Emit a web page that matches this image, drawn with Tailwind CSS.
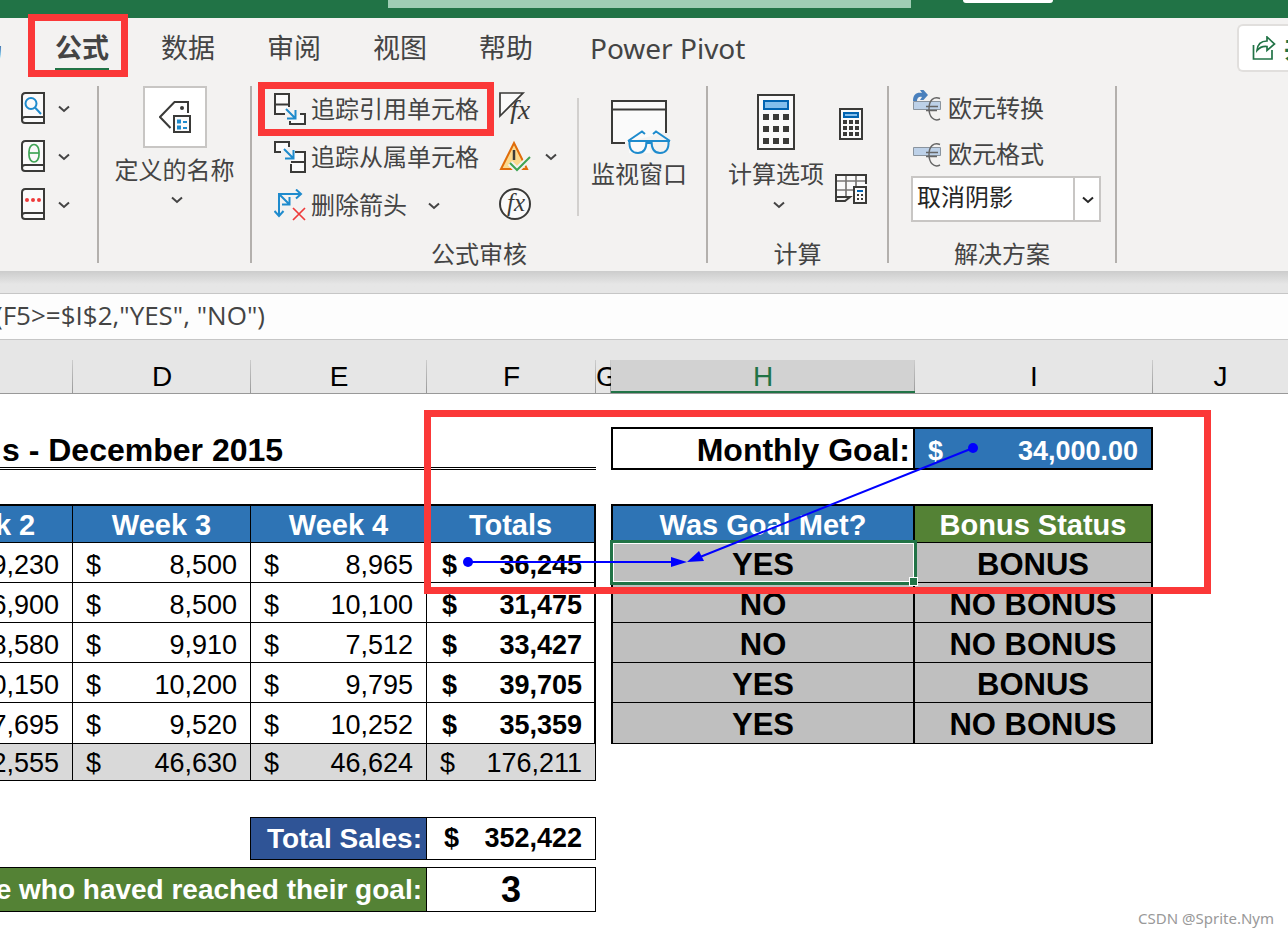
<!DOCTYPE html>
<html lang="zh-CN">
<head>
<meta charset="utf-8">
<title>Excel</title>
<script src="https://cdn.jsdelivr.net/npm/@tailwindcss/browser@4"></script>
</head>
<body class="relative min-h-screen overflow-x-hidden bg-white font-['Noto_Sans','Noto_Sans_CJK_SC',sans-serif] text-[#444444]">
<svg class="hidden" aria-hidden="true">
  <symbol id="chev" viewBox="0 0 12 8"><path d="M1 1.500 6 6 11 1.500" fill="none" stroke="currentColor" stroke-width="2"/></symbol>
  <symbol id="book" viewBox="0 0 24 32"><path d="M4.500 1H23V31H4Q1 31 1 28V4.500Q1 1 4.500 1Z" fill="#fafafa" stroke="#3a3a38" stroke-width="2"/><path d="M1 28Q1 25 4 25H23" fill="none" stroke="#3a3a38" stroke-width="2"/></symbol>
</svg>

<header class="flex h-[18px] items-start bg-[#217346]">
  <div class="ml-[388px] h-2 w-[523px] bg-[#9fcdb4]"></div>
  <div class="ml-[52px] h-[3px] w-[90px] rounded-b bg-white"></div>
</header>

<nav class="flex h-[66px] items-start overflow-hidden bg-[#f3f2f1] text-[27px] leading-[54px]">
  <a href="#" class="flex w-[3px] shrink-0 justify-end overflow-hidden whitespace-nowrap pt-[3px]">页面布局</a>
  <div class="flex shrink-0 gap-[52px] pl-[52px] pt-[3px]">
    <a href="#" class="relative font-bold">公式<span class="absolute inset-x-0 top-[47px] h-[2px] bg-[#217346]"></span></a>
    <a href="#">数据</a>
    <a href="#">审阅</a>
    <a href="#">视图</a>
    <a href="#">帮助</a>
    <a href="#" class="pl-[5px] text-[28px]">Power Pivot</a>
  </div>
  <button class="ml-auto mt-[6px] flex h-12 w-[51px] shrink-0 items-center gap-2 overflow-hidden whitespace-nowrap rounded-l-md border-2 border-r-0 border-[#e1dfdd] bg-white pl-[13px] font-bold text-[#217346]">
    <svg class="size-6 shrink-0" viewBox="0 0 24 24" fill="none" stroke="#217346" stroke-width="1.700"><path d="M1.500 9V23H20V14"/><path d="M5 14.500C5.500 8 9 5 15 5V1L22.500 8 15 14.500V10.500C10.500 10 7.500 11.500 5 14.500Z"/></svg>
    <span>共享</span>
  </button>
</nav>

<section class="flex h-[187px] overflow-x-clip bg-[#f3f2f1] text-2xl leading-none" aria-label="公式">
  <div class="flex w-[97px] shrink-0 flex-col pl-[21px]">
    <button class="flex h-12 items-center gap-[13px]" aria-label="查找与引用"><svg class="h-8 w-6"><use href="#book"/><circle cx="10" cy="11.500" r="5.500" fill="none" stroke="#1e8bcd" stroke-width="2"/><path d="M14 15.500 20 22" stroke="#1e8bcd" stroke-width="2"/></svg><svg class="mt-[2px] h-2 w-3"><use href="#chev"/></svg></button>
    <button class="flex h-12 items-center gap-[13px]" aria-label="数学和三角函数"><svg class="h-8 w-6"><use href="#book"/><rect x="8" y="4.500" width="10" height="17.500" rx="5" ry="7" fill="none" stroke="#3fa455" stroke-width="1.700"/><path d="M8 13H18" stroke="#3fa455" stroke-width="1.700"/></svg><svg class="mt-[2px] h-2 w-3"><use href="#chev"/></svg></button>
    <button class="flex h-12 items-center gap-[13px]" aria-label="其他函数"><svg class="h-8 w-6"><use href="#book"/><g fill="#ee3b3b"><circle cx="6" cy="12" r="2"/><circle cx="12" cy="12" r="2"/><circle cx="18" cy="12" r="2"/></g></svg><svg class="mt-[2px] h-2 w-3"><use href="#chev"/></svg></button>
  </div>
  <div class="mt-[2px] h-[177px] w-[2px] shrink-0 bg-[#b3b0ad]"></div>

  <button class="flex w-[151px] shrink-0 flex-col items-center self-start pt-[2px]">
    <span class="flex h-[62px] w-16 items-center justify-center border-2 border-[#c8c6c4] bg-white">
      <svg class="h-8 w-8" viewBox="0 0 32 32" fill="none"><path d="M11.500 27 1 16 15.500 1H29V12" stroke="#3a3a38" stroke-width="2"/><circle cx="23" cy="7" r="2" fill="#3a3a38"/><rect x="15" y="15" width="16" height="16" fill="#fafafa" stroke="#3a3a38" stroke-width="2"/><path d="M18 18.500h4v4h-4zM18 24.500h4v4h-4zM24 20h4v2h-4zM24 26h4v2h-4z" fill="#1e8bcd"/></svg>
    </span>
    <span class="mt-[10px]">定义的名称</span>
    <svg class="mt-[14px] ml-[5px] h-2 w-3"><use href="#chev"/></svg>
  </button>
  <div class="mt-[2px] h-[177px] w-[2px] shrink-0 bg-[#b3b0ad]"></div>

  <div class="flex w-[454px] shrink-0 flex-col">
    <div class="flex h-[153px]">
      <div class="flex w-[247px] flex-col pl-[22px]">
        <button class="relative flex h-12 items-center gap-[5px] whitespace-nowrap pt-px">
          <svg class="size-8 shrink-0" viewBox="0 0 32 32" fill="none"><g stroke="#3a3a38" stroke-width="2" fill="#fafafa"><path d="M11 21H1V1H15V14"/><path d="M1 11.500H15" /><path d="M16 28V31H31V21H26"/></g><path d="M12 16 21 25M21.500 17V25.500H13" stroke="#1e8bcd" stroke-width="2"/></svg>
          <span>追踪引用单元格</span>
          <span class="pointer-events-none absolute -left-4 -top-[2px] h-[54px] w-[236px] border-[7px] border-[#fb3838]"></span>
        </button>
        <button class="flex h-12 items-center gap-[5px] whitespace-nowrap pt-px">
          <svg class="size-8 shrink-0" viewBox="0 0 32 32" fill="none"><g stroke="#3a3a38" stroke-width="2" fill="#fafafa"><path d="M7 11H1V1H15V6"/><path d="M17 23V31H31V11H21"/><path d="M17 21H31"/></g><path d="M10 8 19 17M19.500 9V17.500H11" stroke="#1e8bcd" stroke-width="2"/></svg>
          <span>追踪从属单元格</span>
        </button>
        <button class="flex h-12 items-center gap-[5px] whitespace-nowrap pt-px">
          <svg class="size-8 shrink-0" viewBox="0 0 32 32" fill="none"><path d="M5 27V5H27M22 .500 27 5 22 9.500M.500 22 5 27 9.500 22M6 6 15 15M15.500 8V15.500H8" stroke="#1e8bcd" stroke-width="2"/><path d="M19 19 31 31M31 19 19 31" stroke="#ee3b3b" stroke-width="1.700"/></svg>
          <span>删除箭头</span>
          <svg class="mt-[2px] ml-4 h-2 w-3"><use href="#chev"/></svg>
        </button>
      </div>
      <div class="flex w-[78px] flex-col">
        <button class="flex h-12 items-center" aria-label="显示公式"><svg class="size-8" viewBox="0 0 32 32"><path d="M1 24V1H24Z" fill="#fafafa" stroke="#3a3a38" stroke-width="1.700"/><text x="11" y="27" font-family="Liberation Serif" font-style="italic" font-size="28" fill="#3a3a38">fx</text></svg></button>
        <button class="flex h-12 items-center gap-[14px]" aria-label="错误检查"><svg class="size-8" viewBox="0 0 32 32" fill="none"><path d="M15 3 28 29H2Z" fill="#fbd98e" stroke="#e06c0a" stroke-width="2"/><path d="M15 10V20" stroke="#3a3a38" stroke-width="2.500"/><path d="M11 23 18 30 31 17" stroke="#f3f2f1" stroke-width="6"/><path d="M11 23 18 30 31 17" stroke="#3fa455" stroke-width="2"/></svg><svg class="mt-[2px] h-2 w-3"><use href="#chev"/></svg></button>
        <button class="flex h-12 items-center" aria-label="公式求值"><svg class="size-8" viewBox="0 0 32 32"><circle cx="16" cy="16" r="15" fill="#fafafa" stroke="#3a3a38" stroke-width="2"/><text x="8" y="23" font-family="Liberation Serif" font-style="italic" font-size="25" fill="#3a3a38">fx</text></svg></button>
      </div>
      <div class="mt-[14px] h-[118px] w-[2px] bg-[#d2d0ce]"></div>
      <button class="flex w-[120px] flex-col items-center self-start pt-4">
        <svg class="ml-1 h-14 w-[60px]" viewBox="0 0 60 56" fill="none"><path d="M14 43H1V1H55V32" fill="#fafafa"/><path d="M14 43H1V1H55V33M1 9.500H55" stroke="#3a3a38" stroke-width="2"/><path d="M18 41h19l3 12H18z" fill="#fafafa"/><path d="M17 41H59M18.500 41C18 49 21 53 27 53S35.500 49 35.500 41M40.500 41C40.500 49 43 53 49 53S58 49 57.500 41M35.500 43H40.500M17 41 31 31.500 34 34M59 41 45 31.500 42 34" stroke="#1e8bcd" stroke-width="2"/></svg>
        <span class="mt-[6px]">监视窗口</span>
      </button>
    </div>
    <div class="h-[34px] text-center leading-[34px]">公式审核</div>
  </div>
  <div class="mt-[2px] h-[177px] w-[2px] shrink-0 bg-[#b3b0ad]"></div>

  <div class="flex w-[179px] shrink-0 flex-col">
    <div class="flex h-[153px]">
      <button class="ml-5 flex w-24 flex-col items-center self-start pt-[10px]">
        <svg class="h-14 w-[38px]" viewBox="0 0 38 56"><rect x="1" y="1" width="36" height="54" fill="#fafafa" stroke="#3a3a38" stroke-width="2"/><rect x="7" y="7" width="24" height="8" fill="#83beec" stroke="#0063b1" stroke-width="2"/><path d="M6 20h6v6H6zM16 20h6v6h-6zM26 20h6v6h-6zM6 32h6v6H6zM16 32h6v6h-6zM26 32h6v6h-6zM6 44h6v6H6zM16 44h6v6h-6zM26 44h6v6h-6z" fill="#3a3a38"/></svg>
        <span class="mt-3">计算选项</span>
        <svg class="mt-[15px] ml-[6px] h-2 w-3"><use href="#chev"/></svg>
      </button>
      <div class="ml-[11px] flex flex-col items-center gap-[34px] pt-6">
        <button aria-label="开始计算"><svg class="h-8 w-6" viewBox="0 0 24 32"><rect x="1" y="1" width="22" height="30" fill="#fafafa" stroke="#3a3a38" stroke-width="2"/><rect x="5" y="5" width="14" height="4" fill="#83beec" stroke="#0063b1" stroke-width="2"/><path d="M4 12h4v4H4zM10 12h4v4h-4zM16 12h4v4h-4zM4 18h4v4H4zM10 18h4v4h-4zM16 18h4v4h-4zM4 24h4v4H4zM10 24h4v4h-4zM16 24h4v4h-4z" fill="#3a3a38"/></svg></button>
        <button aria-label="计算工作表"><svg class="h-[30px] w-8" viewBox="0 0 32 30" fill="none"><path d="M1 1H31V12H18V24H1Z" fill="#fafafa"/><path d="M1 7H31M1 16H18M11 1V24M21 1V12" stroke="#797775" stroke-width="1.700"/><path d="M31 10V1H1V27H10L15 23H1" stroke="#3a3a38" stroke-width="2"/><rect x="19" y="13" width="12" height="16" fill="#fafafa" stroke="#3a3a38" stroke-width="2"/><path d="M22 16h6v2h-6z" fill="#0063b1"/><path d="M22 20h2v2h-2zM26 20h2v2h-2zM22 24h2v2h-2zM26 24h2v2h-2z" fill="#3a3a38"/></svg></button>
      </div>
    </div>
    <div class="h-[34px] text-center leading-[34px]">计算</div>
  </div>
  <div class="mt-[2px] h-[177px] w-[2px] shrink-0 bg-[#b3b0ad]"></div>

  <div class="flex w-[226px] shrink-0 flex-col">
    <div class="flex h-[153px] flex-col items-start pl-[22px]">
      <button class="flex h-[46px] items-center gap-[7px] pl-[2px] pt-[2px]"><svg class="h-8 w-7 overflow-visible" viewBox="0 0 28 32" fill="none"><path d="M.500 9.500H27.500V17.500H.500Z" fill="#bdd1e8" stroke="#8a949e"/><path d="M0 9C0 2 4 0 9 1L7 -2H10.500L15 3 10.500 8H7L9 5C6 4 4 6 4 9Z" fill="#4a80bd"/><path d="M27 6.500C21 4 16 8 16 16.500S21 30 27 27M13 14.500H25M13 18.500H24" stroke="#666" stroke-width="1.400"/></svg>欧元转换</button>
      <button class="flex h-[46px] items-center gap-[7px] pl-[2px] pt-[2px]"><svg class="h-8 w-7" viewBox="0 0 28 32" fill="none"><path d="M.500 9.500H27.500V17.500H.500Z" fill="#bdd1e8" stroke="#8a949e"/><path d="M27 6.500C21 4 16 8 16 16.500S21 30 27 27M13 14.500H25M13 18.500H24" stroke="#666" stroke-width="1.400"/></svg>欧元格式</button>
      <div class="relative w-[190px] text-[#262626]">
        <select aria-label="取消阴影" class="h-[46px] w-full appearance-none border-2 border-[#c8c6c4] bg-white pb-1 pl-1"><option>取消阴影</option></select>
        <span class="pointer-events-none absolute inset-y-0 right-0 flex w-7 items-center justify-center border-l-2 border-[#c8c6c4]"><svg class="mt-[2px] h-2 w-3"><use href="#chev"/></svg></span>
      </div>
    </div>
    <div class="h-[34px] text-center leading-[34px]">解决方案</div>
  </div>
  <div class="mt-[2px] h-[177px] w-[2px] shrink-0 bg-[#b3b0ad]"></div>
</section>

<div class="h-[22px] bg-linear-to-b from-[#cccccc] to-[#e6e6e6] to-60%"></div>
<input aria-label="编辑栏" class="block h-[47px] w-full border-y border-[#c6c6c6] bg-[#fdfdfd] pb-1 indent-[-5px] font-['Open_Sans',sans-serif] text-[26px] text-[#444444]" value="(F5&gt;=$I$2,&quot;YES&quot;, &quot;NO&quot;)">
<div class="h-5 bg-[#e6e6e6]"></div>

<main class="relative overflow-hidden font-['Liberation_Sans',sans-serif] text-[27px] leading-none text-black">
  <table class="ml-[-101px] w-[calc(100%+101px)] table-fixed border-separate border-spacing-0">
    <colgroup><col class="w-[174px]"><col class="w-[178px]"><col class="w-[176px]"><col class="w-[169px]"><col class="w-[15px]"><col class="w-[304px]"><col class="w-[238px]"><col></colgroup>
    <thead>
      <tr class="h-[34px] bg-[#e6e6e6] text-[28px] [&>th]:border-b [&>th]:border-[#999999] [&>th]:bg-linear-to-b [&>th]:from-[#cccccc] [&>th]:to-[#999999] [&>th]:bg-[length:1px_100%] [&>th]:bg-right [&>th]:bg-no-repeat [&>th]:pt-px [&>th]:font-normal">
        <th>C</th><th>D</th><th>E</th><th>F</th>
        <th><div class="flex overflow-hidden">G</div></th>
        <th class="bg-[#d2d2d2] text-[#217346] shadow-[inset_0_-2px_0_#217346]">H</th><th>I</th><th class="bg-none!">J</th>
      </tr>
    </thead>
    <tbody>
      <tr class="h-[33px]"><td colspan="8"></td></tr>
      <tr class="h-[43px] font-bold">
        <td colspan="4" class="border-b-[3px] border-double border-black"><div class="pl-[103px] pt-[6px] text-[32px]">s - December 2015</div></td>
        <td></td>
        <td class="border-2 border-black"><div class="pr-[3px] pt-[3px] text-right text-[32px]">Monthly Goal:</div></td>
        <td class="border-y-2 border-r-2 border-black bg-[#2e74b5] text-white"><div class="flex justify-between pl-[13px] pr-[13px] pt-[5px]"><span>$</span><span>34,000.00</span></div></td>
        <td></td>
      </tr>
      <tr class="h-[34px]"><td colspan="8"></td></tr>
      <tr class="h-[39px] text-center text-[29px] font-bold text-white [&>td]:border-black [&>td]:pt-[2px]">
        <td class="border-r border-b border-t-2 bg-[#2e74b5]">Week 2</td>
        <td class="border-r border-b border-t-2 bg-[#2e74b5]">Week 3</td>
        <td class="border-r border-b border-t-2 bg-[#2e74b5]">Week 4</td>
        <td class="border-r-2 border-b border-t-2 bg-[#2e74b5]">Totals</td>
        <td></td>
        <td class="border-x-2 border-b border-t-2 bg-[#2e74b5]">Was Goal Met?</td>
        <td class="border-r-2 border-b border-t-2 bg-[#548235]">Bonus Status</td>
        <td></td>
      </tr>
      <tr class="h-10 [&>td]:border-black">
        <td class="border-r border-b"><div class="flex justify-between pl-[13px] pr-[13px] pt-[5px]"><span>$</span><span>9,230</span></div></td>
        <td class="border-r border-b"><div class="flex justify-between pl-[13px] pr-[13px] pt-[5px]"><span>$</span><span>8,500</span></div></td>
        <td class="border-r border-b"><div class="flex justify-between pl-[13px] pr-[13px] pt-[5px]"><span>$</span><span>8,965</span></div></td>
        <td class="border-r-2 border-b font-bold"><div class="flex justify-between pl-[15px] pr-3 pt-[5px]"><span>$</span><span>36,245</span></div></td>
        <td></td>
        <td class="border-x-2 border-b bg-[#bfbfbf] pt-[3px] text-center text-[31px] font-bold">YES</td>
        <td class="border-r-2 border-b bg-[#bfbfbf] pt-[3px] text-center text-[31px] font-bold">BONUS</td>
        <td></td>
      </tr>
      <tr class="h-10 [&>td]:border-black">
        <td class="border-r border-b"><div class="flex justify-between pl-[13px] pr-[13px] pt-[5px]"><span>$</span><span>6,900</span></div></td>
        <td class="border-r border-b"><div class="flex justify-between pl-[13px] pr-[13px] pt-[5px]"><span>$</span><span>8,500</span></div></td>
        <td class="border-r border-b"><div class="flex justify-between pl-[13px] pr-[13px] pt-[5px]"><span>$</span><span>10,100</span></div></td>
        <td class="border-r-2 border-b font-bold"><div class="flex justify-between pl-[15px] pr-3 pt-[5px]"><span>$</span><span>31,475</span></div></td>
        <td></td>
        <td class="border-x-2 border-b bg-[#bfbfbf] pt-[3px] text-center text-[31px] font-bold">NO</td>
        <td class="border-r-2 border-b bg-[#bfbfbf] pt-[3px] text-center text-[31px] font-bold">NO BONUS</td>
        <td></td>
      </tr>
      <tr class="h-10 [&>td]:border-black">
        <td class="border-r border-b"><div class="flex justify-between pl-[13px] pr-[13px] pt-[5px]"><span>$</span><span>8,580</span></div></td>
        <td class="border-r border-b"><div class="flex justify-between pl-[13px] pr-[13px] pt-[5px]"><span>$</span><span>9,910</span></div></td>
        <td class="border-r border-b"><div class="flex justify-between pl-[13px] pr-[13px] pt-[5px]"><span>$</span><span>7,512</span></div></td>
        <td class="border-r-2 border-b font-bold"><div class="flex justify-between pl-[15px] pr-3 pt-[5px]"><span>$</span><span>33,427</span></div></td>
        <td></td>
        <td class="border-x-2 border-b bg-[#bfbfbf] pt-[3px] text-center text-[31px] font-bold">NO</td>
        <td class="border-r-2 border-b bg-[#bfbfbf] pt-[3px] text-center text-[31px] font-bold">NO BONUS</td>
        <td></td>
      </tr>
      <tr class="h-10 [&>td]:border-black">
        <td class="border-r border-b"><div class="flex justify-between pl-[13px] pr-[13px] pt-[5px]"><span>$</span><span>10,150</span></div></td>
        <td class="border-r border-b"><div class="flex justify-between pl-[13px] pr-[13px] pt-[5px]"><span>$</span><span>10,200</span></div></td>
        <td class="border-r border-b"><div class="flex justify-between pl-[13px] pr-[13px] pt-[5px]"><span>$</span><span>9,795</span></div></td>
        <td class="border-r-2 border-b font-bold"><div class="flex justify-between pl-[15px] pr-3 pt-[5px]"><span>$</span><span>39,705</span></div></td>
        <td></td>
        <td class="border-x-2 border-b bg-[#bfbfbf] pt-[3px] text-center text-[31px] font-bold">YES</td>
        <td class="border-r-2 border-b bg-[#bfbfbf] pt-[3px] text-center text-[31px] font-bold">BONUS</td>
        <td></td>
      </tr>
      <tr class="h-[41px] [&>td]:border-black">
        <td class="border-r border-b"><div class="flex justify-between pl-[13px] pr-[13px] pt-[5px]"><span>$</span><span>7,695</span></div></td>
        <td class="border-r border-b"><div class="flex justify-between pl-[13px] pr-[13px] pt-[5px]"><span>$</span><span>9,520</span></div></td>
        <td class="border-r border-b"><div class="flex justify-between pl-[13px] pr-[13px] pt-[5px]"><span>$</span><span>10,252</span></div></td>
        <td class="border-r-2 border-b font-bold"><div class="flex justify-between pl-[15px] pr-3 pt-[5px]"><span>$</span><span>35,359</span></div></td>
        <td></td>
        <td class="border-x-2 border-b bg-[#bfbfbf] pt-[2px] text-center text-[31px] font-bold">YES</td>
        <td class="border-r-2 border-b bg-[#bfbfbf] pt-[2px] text-center text-[31px] font-bold">NO BONUS</td>
        <td></td>
      </tr>
      <tr class="h-[37px] [&>td]:border-black">
        <td class="border-r border-b bg-[#d9d9d9]"><div class="flex justify-between pl-[13px] pr-[13px] pt-[3px]"><span>$</span><span>42,555</span></div></td>
        <td class="border-r border-b bg-[#d9d9d9]"><div class="flex justify-between pl-[13px] pr-[13px] pt-[3px]"><span>$</span><span>46,630</span></div></td>
        <td class="border-r border-b bg-[#d9d9d9]"><div class="flex justify-between pl-[13px] pr-[13px] pt-[3px]"><span>$</span><span>46,624</span></div></td>
        <td class="border-r border-b bg-[#d9d9d9]"><div class="flex justify-between pl-[13px] pr-[13px] pt-[3px]"><span>$</span><span>176,211</span></div></td>
        <td colspan="4"></td>
      </tr>
      <tr class="h-9"><td colspan="8"></td></tr>
      <tr class="h-[43px] font-bold [&>td]:border-black">
        <td></td><td class="border-r"></td>
        <td class="border-y border-r bg-[#2f5496] pr-1 text-right text-[28px] text-white">Total Sales:</td>
        <td class="border-y border-r"><div class="flex justify-between pl-[17px] pr-[13px]"><span>$</span><span>352,422</span></div></td>
        <td colspan="4"></td>
      </tr>
      <tr class="h-[7px]"><td colspan="8"></td></tr>
      <tr class="h-[45px] font-bold [&>td]:border-black">
        <td colspan="3" class="border-y border-r bg-[#548235] pr-1 text-right text-[28px] text-white">e who haved reached their goal:</td>
        <td class="border-y border-r text-center text-4xl leading-none">3</td>
        <td colspan="4"></td>
      </tr>
    </tbody>
  </table>

  <div class="pointer-events-none absolute left-[610px] top-[180px] h-[45px] w-[307px] border-[3px] border-[#217346]"><div class="h-full border border-white"></div></div>
  <div class="absolute left-[909px] top-[217px] size-[9px] border border-white bg-[#217346]"></div>
  <svg class="pointer-events-none absolute left-0 top-0 h-[300px] w-[1288px]" fill="#0000ff"><path d="M468 202H675" stroke="#0000ff" stroke-width="2"/><circle cx="468" cy="202" r="5"/><path d="M671 197 687 202 671 207Z"/><path d="M973 88 695 199" stroke="#0000ff" stroke-width="2"/><circle cx="973" cy="88" r="5"/><path d="M687 202 699 191 704 201Z"/></svg>
  <div class="pointer-events-none absolute left-[424px] top-[50px] h-[184px] w-[787px] border-[7px] border-[#fb3838]"></div>
</main>

<div class="pointer-events-none absolute left-[28px] top-[14px] h-[63px] w-[100px] border-[7px] border-[#fb3838]"></div>
<p class="absolute bottom-[7px] right-[14px] font-['Noto_Sans',sans-serif] text-[15px] text-[#999999]">CSDN @Sprite.Nym</p>
</body>
</html>
